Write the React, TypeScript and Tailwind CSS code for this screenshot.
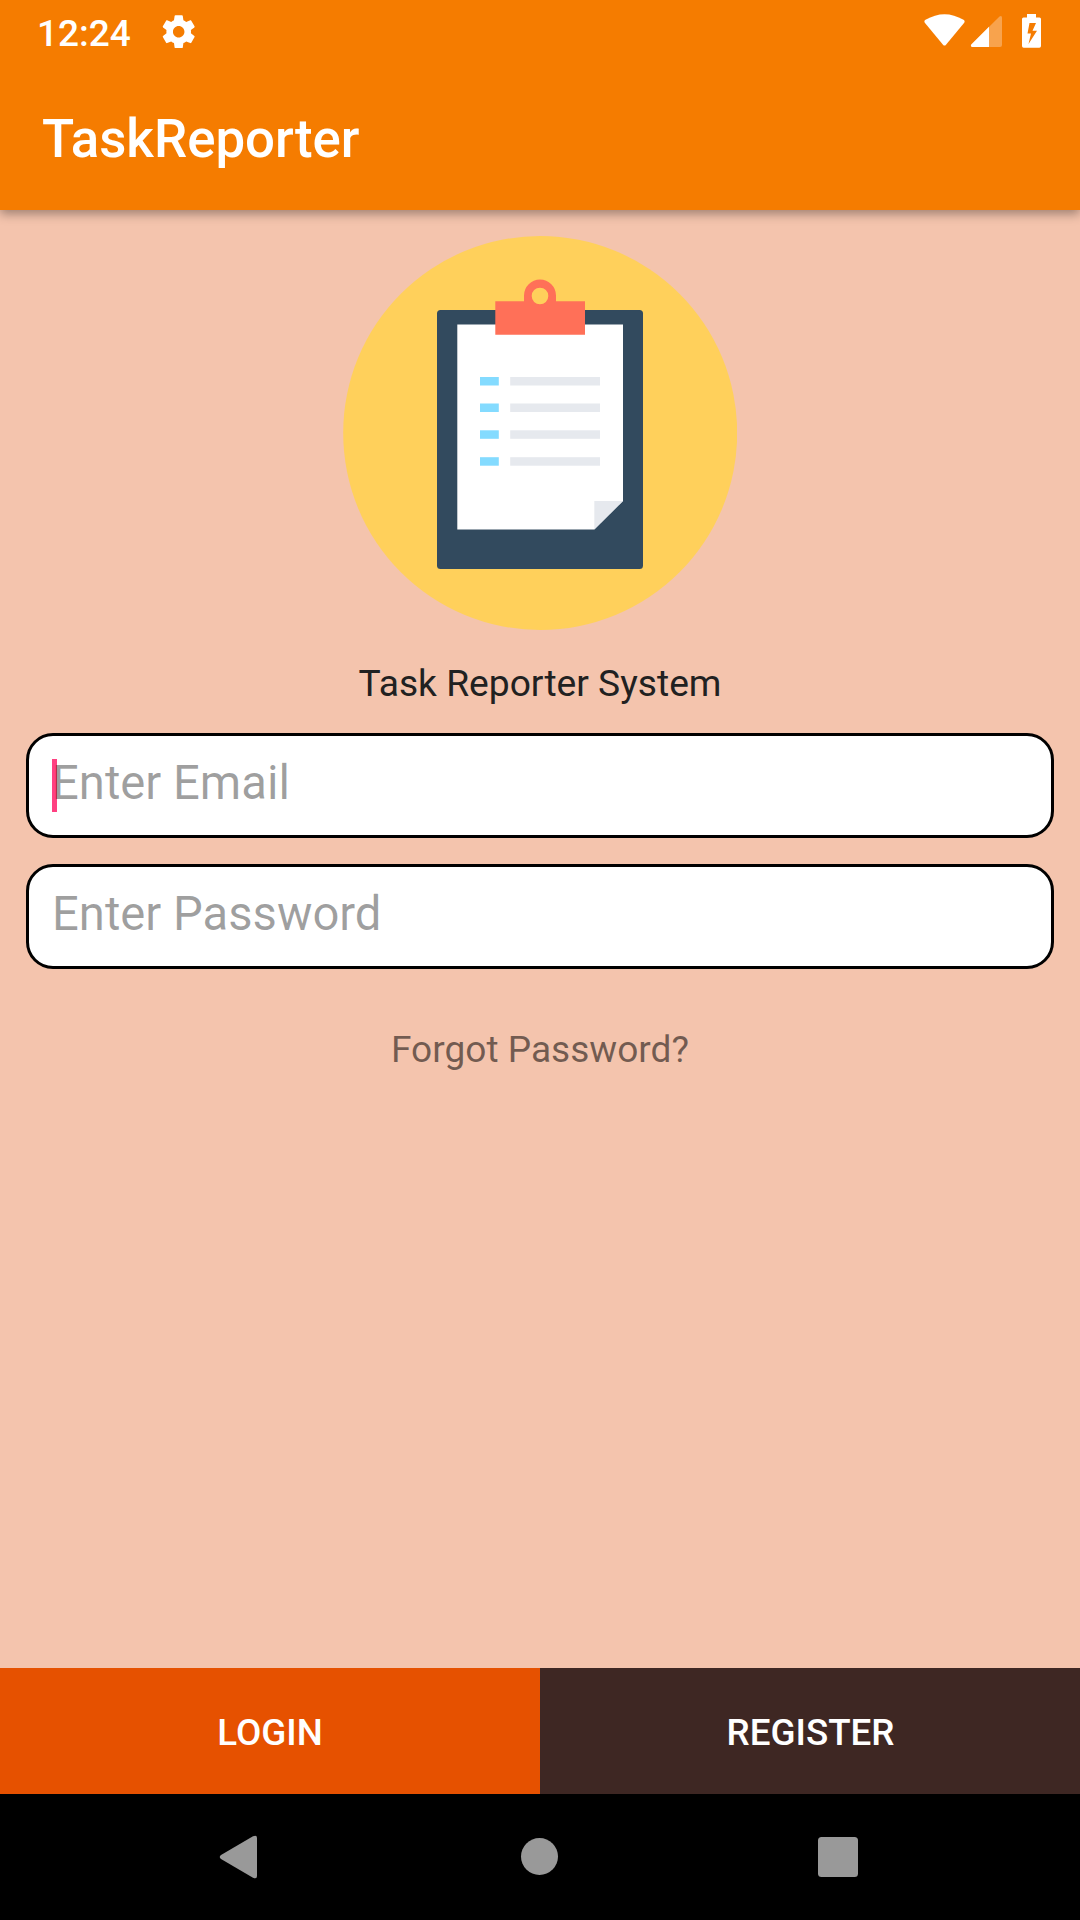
const tasks = [377, 403.5, 430.3, 457.2];

function StatusBar() {
  return (
    <div className="flex h-[63px] items-center pr-[38px] pl-[37px] text-white">
      <span className="mt-[4px] text-[37px] leading-[44px] font-medium">12:24</span>
      <svg className="mt-px ml-[28px] size-[39.4px]" viewBox="0 0 24 24" fill="currentColor">
        <path d="M19.43 12.98c.04-.32.07-.64.07-.98s-.03-.66-.07-.98l2.11-1.65c.19-.15.24-.42.12-.64l-2-3.46c-.12-.22-.39-.3-.61-.22l-2.49 1c-.52-.4-1.08-.73-1.69-.98l-.38-2.65C14.46 2.18 14.25 2 14 2h-4c-.25 0-.46.18-.49.42l-.38 2.65c-.61.25-1.17.59-1.69.98l-2.49-1c-.23-.09-.49 0-.61.22l-2 3.46c-.13.22-.07.49.12.64l2.11 1.65c-.04.32-.07.65-.07.98s.03.66.07.98l-2.11 1.65c-.19.15-.24.42-.12.64l2 3.46c.12.22.39.3.61.22l2.49-1c.52.4 1.08.73 1.69.98l.38 2.65c.03.24.24.42.49.42h4c.25 0 .46-.18.49-.42l.38-2.65c.61-.25 1.17-.59 1.69-.98l2.49 1c.23.09.49 0 .61-.22l2-3.46c.12-.22.07-.49-.12-.64l-2.11-1.65zM12 15.5c-1.93 0-3.5-1.57-3.5-3.5s1.57-3.5 3.5-3.5 3.5 1.57 3.5 3.5-1.57 3.5-3.5 3.5z" />
      </svg>
      <svg className="ml-auto h-[63px] w-[118px]" viewBox="924 0 118 63" fill="currentColor">
        <path d="M925 23Q923.5 21 925.5 19.800Q944.5 8.500 963.500 19.800Q965.500 21 964 23L946 44.700Q944.500 46.500 943 44.700Z" />
        <path d="M972 47Q970 46 971.500 44.200L999.500 16.500Q1002 15 1002 18V45Q1002 47 1000 47Z" opacity=".3" />
        <path d="M972 47Q970 46 971.500 44.200L989 26.700V47Z" />
        <path fillRule="evenodd" d="M1027 14H1036V17.500H1039.500Q1041 17.500 1041 19V46Q1041 47.700 1039.300 47.700H1023.700Q1022 47.700 1022 46V19Q1022 17.500 1023.500 17.500H1027ZM1029.500 23L1027.500 33.500H1031L1028.500 44L1037 30.800H1032.500L1036 23Z" />
      </svg>
    </div>
  );
}

function Clipboard() {
  return (
    <svg className="h-[394px] w-[394px]" viewBox="343 236 394 394">
      <circle cx="540.200" cy="433" r="197" fill="#ffd05b" />
      <rect x="437" y="310" width="206" height="259" rx="3.500" fill="#324a5e" />
      <path d="M457.300 324.500H623V501L594.300 529.500H457.300Z" fill="#fff" />
      <path d="M594.300 501H623L594.300 529.500Z" fill="#e6e9ee" />
      <path fillRule="evenodd" d="M495.300 301.300H524V295.500A16 16 0 0 1 556 295.500V301.300H585V334.700H495.300ZM531.700 296A8.300 8.300 0 1 0 548.300 296A8.300 8.300 0 1 0 531.700 296Z" fill="#ff7058" />
      {tasks.map((y) => (
        <g key={y}>
          <rect x="480" y={y} width="18.800" height="8.500" fill="#84dbff" />
          <rect x="510.200" y={y} width="89.800" height="8.500" fill="#e6e9ee" />
        </g>
      ))}
    </svg>
  );
}

function Field({ hint, focused = false }: { hint: string; focused?: boolean }) {
  return (
    <div className="relative flex h-[105px] items-center rounded-[27px] border-[3px] border-black bg-white pb-[5px] pl-[23px]">
      {focused && <span className="absolute top-[23px] left-[23px] h-[53px] w-[5px] bg-[#ff4081]" />}
      <span className="relative text-[47.2px] leading-[56px] text-black/38">{hint}</span>
    </div>
  );
}

export default function App() {
  return (
    <div className="flex h-[1920px] w-[1080px] flex-col overflow-hidden bg-[#f4c4ad] font-[Roboto,sans-serif]">
      <header className="relative h-[210px] bg-[#f57c00] shadow-[0_4px_10px_rgba(0,0,0,0.35)]">
        <StatusBar />
        <h1 className="mt-[44px] ml-[42px] text-[52.8px] leading-[64px] font-medium text-white">TaskReporter</h1>
      </header>
      <main className="flex flex-1 flex-col px-[26px] pt-[26px]">
        <div className="flex justify-center">
          <Clipboard />
        </div>
        <p className="mt-[31px] text-center text-[37.2px] leading-[44px] text-[#212121]">Task Reporter System</p>
        <div className="mt-[28px] flex flex-col gap-[26px]">
          <Field hint="Enter Email" focused />
          <Field hint="Enter Password" />
        </div>
        <a className="mt-[59px] text-center text-[37.1px] leading-[44px] text-black/54">Forgot Password?</a>
      </main>
      <div className="grid h-[126px] grid-cols-2 text-[36.75px] font-medium text-white">
        <button className="bg-[#e65100] pt-[3px]">LOGIN</button>
        <button className="bg-[#3e2723] pt-[3px] pl-px">REGISTER</button>
      </div>
      <nav className="h-[126px] bg-black">
        <svg className="h-[126px] w-[1080px]" viewBox="0 1794 1080 126" fill="#999">
          <path d="M221 1855L253 1836.300Q257 1834.500 257 1838V1876Q257 1879.500 253 1877.700L221 1859Q218.500 1857 221 1855Z" />
          <circle cx="539.500" cy="1856.500" r="18.500" />
          <rect x="818" y="1837" width="40" height="40" rx="3.500" />
        </svg>
      </nav>
    </div>
  );
}
